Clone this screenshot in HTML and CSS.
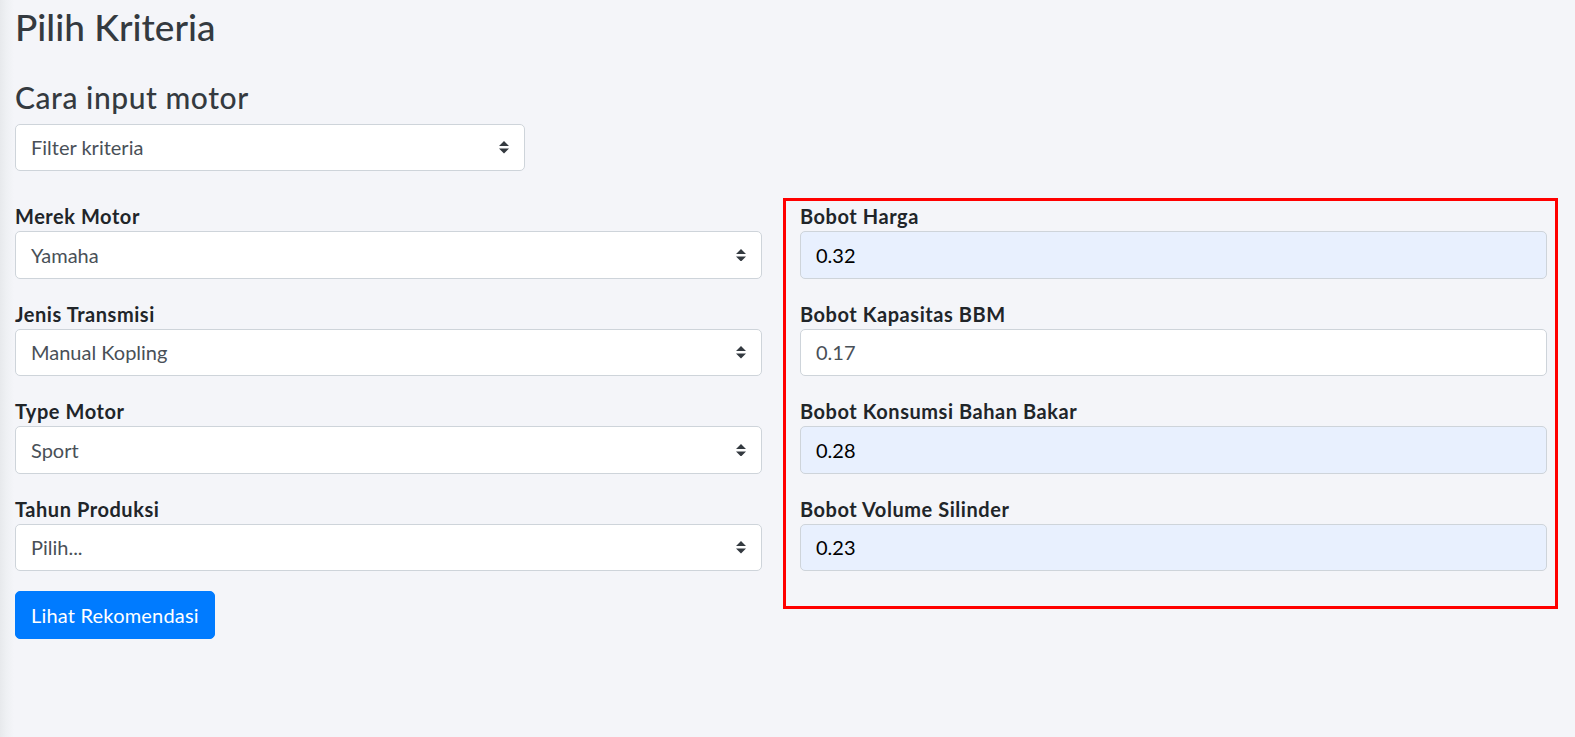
FILE: index.html
```html
<!DOCTYPE html>
<html lang="id">
<head>
<meta charset="utf-8">
<title>Pilih Kriteria</title>
<link rel="stylesheet" href="styles.css">
</head>
<body>
<div class="page">
  <h1 class="title">Pilih Kriteria</h1>
  <h2 class="subtitle">Cara input motor</h2>
  <div class="select filter"><span>Filter kriteria</span><svg class="arrow" viewBox="0 0 4 5"><path d="M2 0L0 2h4zm0 5L0 3h4z"/></svg></div>

  <div class="row">
    <div class="col-left">
      <div class="group">
        <label class="label">Merek Motor</label>
        <div class="select"><span>Yamaha</span><svg class="arrow" viewBox="0 0 4 5"><path d="M2 0L0 2h4zm0 5L0 3h4z"/></svg></div>
      </div>
      <div class="group">
        <label class="label">Jenis Transmisi</label>
        <div class="select"><span>Manual Kopling</span><svg class="arrow" viewBox="0 0 4 5"><path d="M2 0L0 2h4zm0 5L0 3h4z"/></svg></div>
      </div>
      <div class="group">
        <label class="label">Type Motor</label>
        <div class="select"><span>Sport</span><svg class="arrow" viewBox="0 0 4 5"><path d="M2 0L0 2h4zm0 5L0 3h4z"/></svg></div>
      </div>
      <div class="group">
        <label class="label">Tahun Produksi</label>
        <div class="select"><span>Pilih...</span><svg class="arrow" viewBox="0 0 4 5"><path d="M2 0L0 2h4zm0 5L0 3h4z"/></svg></div>
      </div>
      <button class="btn" type="button">Lihat Rekomendasi</button>
    </div>

    <div class="col-right">
      <div class="group">
        <label class="label">Bobot Harga</label>
        <input class="control autofill" type="text" value="0.32" readonly>
      </div>
      <div class="group">
        <label class="label">Bobot Kapasitas BBM</label>
        <input class="control" type="text" value="0.17" readonly>
      </div>
      <div class="group">
        <label class="label">Bobot Konsumsi Bahan Bakar</label>
        <input class="control autofill" type="text" value="0.28" readonly>
      </div>
      <div class="group">
        <label class="label">Bobot Volume Silinder</label>
        <input class="control autofill" type="text" value="0.23" readonly>
      </div>
    </div>
  </div>
</div>
</body>
</html>
```

FILE: styles.css
```css
html, body {
  margin: 0;
  padding: 0;
}

body {
  width: 1575px;
  height: 737px;
  overflow: hidden;
  background: linear-gradient(to right, #e7e9ec 0, #eef0f3 6px, #f4f5f9 14px, #f4f5f9 100%);
  font-family: Lato, "Noto Sans", sans-serif;
  color: #212529;
}

.page {
  padding: 5px 0 0 15px;
}

.title {
  margin: 0;
  font-size: 37px;
  line-height: 44px;
  font-weight: 500;
  color: #343a40;
}

.subtitle {
  margin: 30px 0 0 0;
  font-size: 30px;
  line-height: 36px;
  font-weight: 500;
  letter-spacing: 0.55px;
  color: #343a40;
}

.select,
.control {
  box-sizing: border-box;
  height: 47.5px;
  padding: 7.5px 15px;
  font-family: Lato, "Noto Sans", sans-serif;
  font-size: 20px;
  line-height: 30px;
  color: #495057;
  background: #fff;
  border: 1px solid #ced4da;
  border-radius: 5px;
}

.select {
  display: flex;
  align-items: center;
  justify-content: space-between;
}

.filter {
  width: 510px;
  margin-top: 8.5px;
}

.arrow {
  width: 10px;
  height: 12.5px;
  fill: #343a40;
  flex: none;
}

.control {
  display: block;
  width: 100%;
  outline: none;
}

.control.autofill {
  background: #e8f0fe;
  color: #000;
}

.row {
  display: flex;
  align-items: flex-start;
  margin-top: 27px;
}

.col-left {
  width: 747px;
  margin-top: 3px;
}

.col-right {
  width: 775px;
  box-sizing: border-box;
  margin-left: 21px;
  border: 3px solid #ff0000;
  padding: 0 8px 15px 14px;
}

.group {
  margin-bottom: 20px;
}

.label {
  display: block;
  font-size: 20px;
  line-height: 30px;
  font-weight: 700;
  letter-spacing: 0.55px;
  color: #212529;
}

.btn {
  display: block;
  height: 48px;
  padding: 0 15px;
  font-family: Lato, "Noto Sans", sans-serif;
  font-size: 20px;
  line-height: 30px;
  letter-spacing: 0.2px;
  color: #fff;
  background: #007bff;
  border: 1px solid #007bff;
  border-radius: 5px;
}
```
